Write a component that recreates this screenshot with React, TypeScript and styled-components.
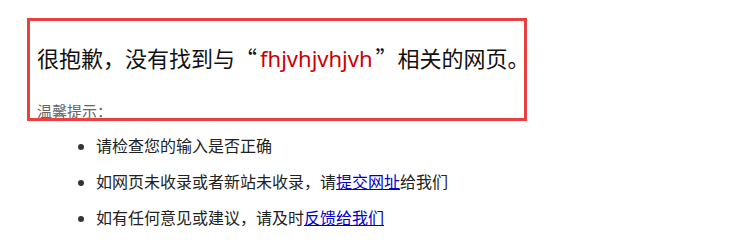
import styled, { createGlobalStyle } from "styled-components";

const GlobalStyle = createGlobalStyle`
  body {
    margin: 0;
    background: #fff;
    font-family: "Noto Sans", "Noto Sans CJK SC", sans-serif;
  }
`;

const Page = styled.div`
  position: relative;
  padding: 0 0 0 37px;
  height: 234px;
  overflow: hidden;
`;

const Title = styled.h2`
  margin: 42px 0 0;
  font-size: 22px;
  font-weight: normal;
  line-height: 30px;
  color: #111;
  white-space: nowrap;
`;

const Quote = styled.span<{ $open?: boolean }>`
  font-family: "Noto Sans CJK SC", sans-serif;
  margin: ${(p) => (p.$open ? "0 3px 0 0" : "0 0 0 3px")};
`;

const Keyword = styled.em`
  font-style: normal;
  color: #c00;
`;

const Tip = styled.p`
  margin: 28px 0 0;
  font-size: 15px;
  line-height: 20px;
  color: #666;
`;

const List = styled.ul`
  margin: 7px 0 0;
  padding-left: 59px;
  list-style: disc;
`;

const Item = styled.li`
  font-size: 16px;
  line-height: 36px;
  color: #222;

  &::marker {
    color: #333;
  }

  a {
    color: #00c;
    text-decoration: underline;
  }
`;

// red annotation frame drawn over the heading area
const Highlight = styled.div`
  position: absolute;
  left: 27px;
  top: 18px;
  width: 500px;
  height: 103px;
  box-sizing: border-box;
  border: 3px solid #e8413f;
  pointer-events: none;
`;

export default function App() {
  return (
    <>
      <GlobalStyle />
      <Page>
        <Title>
          很抱歉，没有找到与<Quote $open>“</Quote>
          <Keyword>fhjvhjvhjvh</Keyword>
          <Quote>”</Quote>相关的网页。
        </Title>
        <Tip>温馨提示：</Tip>
        <List>
          <Item>请检查您的输入是否正确</Item>
          <Item>
            如网页未收录或者新站未收录，请<a href="#">提交网址</a>给我们
          </Item>
          <Item>
            如有任何意见或建议，请及时<a href="#">反馈给我们</a>
          </Item>
        </List>
        <Highlight />
      </Page>
    </>
  );
}
